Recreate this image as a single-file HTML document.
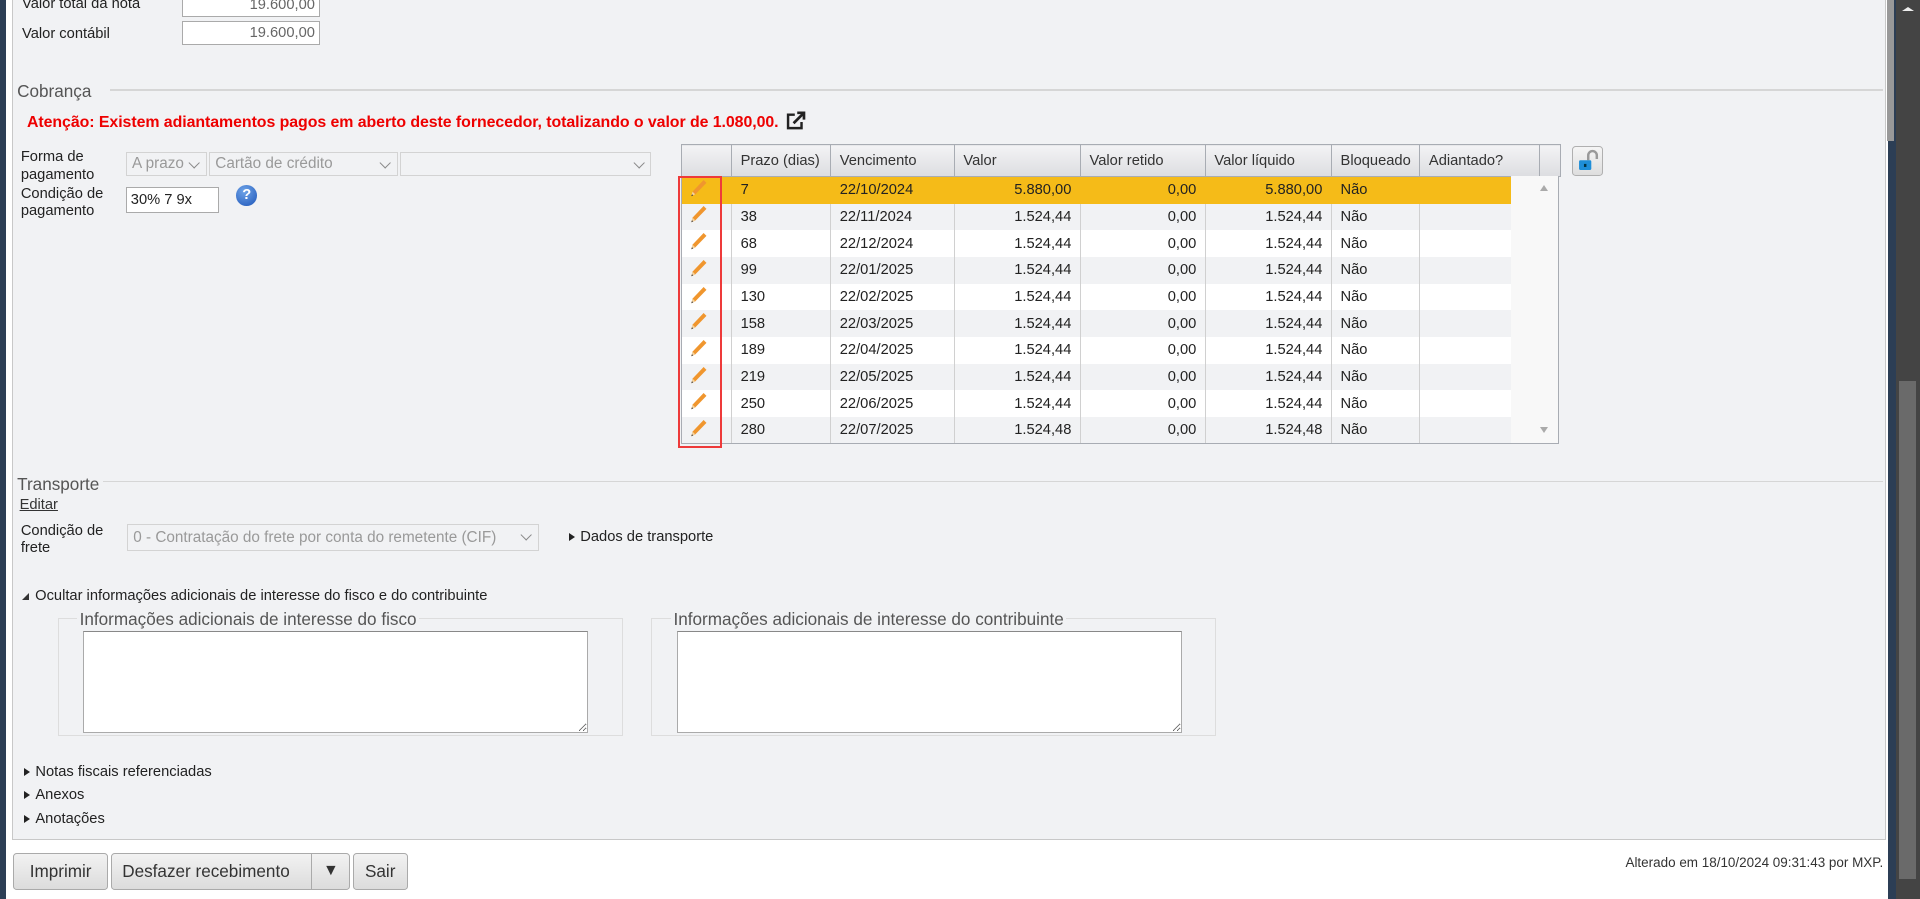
<!DOCTYPE html>
<html><head><meta charset="utf-8"><style>
*{box-sizing:border-box;margin:0;padding:0}
html,body{width:1920px;height:899px;overflow:hidden;background:#fff}
#w{zoom:1.22449;width:1568px;height:734px;position:relative;font-family:"Liberation Sans",sans-serif;font-size:12px;color:#222}
.a{position:absolute}
.panel{left:10px;top:-2px;width:1530px;height:688px;background:#f1f2f4;border:1px solid #c8c8c8}
.inp{position:absolute;background:#fff;border:1px solid #aaa;height:20px;font-size:12px;color:#666;text-align:right;padding:2px 3px;line-height:15px}
.sel{position:absolute;background:#f1f2f4;border:1px solid #d3d3d3;height:20px;color:#999;font-size:12.5px;padding:2px 4px;line-height:15px}
.sel:after{content:"";position:absolute;right:6px;top:5px;width:6px;height:6px;border-right:1.5px solid #888;border-bottom:1.5px solid #888;transform:rotate(45deg)}
.leg{font-size:14px;color:#555}
.hr{position:absolute;height:1px;background:#d6d6d6}
table{border-collapse:collapse;position:absolute;left:556px;top:118px;font-size:12px}
td,th{height:21.8px;padding:0 7px;white-space:nowrap;border-left:1px solid #d0d0d0;border-right:1px solid #d0d0d0}
th{font-weight:normal;text-align:left;height:26px;background:linear-gradient(#f3f3f5,#dcdde0);border:1px solid #a8acb3;color:#333}
td.r{text-align:right}
tr.s td{background:#f5bb18;border-color:#f5bb18}
tr.o td{background:#fff}
tr.e td{background:#f1f2f4}
td.p{padding:0 0 0 5px}
td.x{background:#f1f2f4!important;border:none}
.btn{position:absolute;top:697px;height:30px;border:1px solid #aaa;border-radius:3px;background:linear-gradient(#f2f2f2,#dcdcdc);font-size:14px;color:#333;line-height:28px;text-align:center}
.tri{display:inline-block;width:0;height:0;border-left:5px solid #222;border-top:4px solid transparent;border-bottom:4px solid transparent;margin-right:4px}
textarea{position:absolute;background:#fff;border:1px solid #aaa;border-top:1px solid #888;resize:both}
.fs{position:absolute;border:1px solid #ddd}
</style></head><body><div id="w">
<div class="a" style="left:0;top:0;width:5px;height:734px;background:#2c3e55"></div>
<div class="a" style="left:1542px;top:0;width:6px;height:734px;background:#2c3e55"></div>
<div class="a" style="left:1541px;top:0;width:6px;height:115px;background:#999"></div>
<div class="a" style="left:1548px;top:0;width:20px;height:734px;background:#444"></div>
<div class="a" style="left:1551px;top:311px;width:14px;height:407px;background:#6a6a6a"></div>
<div class="a" style="left:1553px;top:6px;width:0;height:0;border-left:5px solid transparent;border-right:5px solid transparent;border-bottom:4px solid #eee"></div>
<div class="a panel"></div>

<div class="a" style="left:18px;top:-3px">Valor total da nota</div>
<div class="inp" style="left:149px;top:-6px;width:112px">19.600,00</div>
<div class="a" style="left:18px;top:21px">Valor contábil</div>
<div class="inp" style="left:149px;top:17px;width:112px">19.600,00</div>

<div class="hr" style="left:90px;top:73px;width:1448px"></div>
<div class="a leg" style="left:14px;top:66px">Cobrança</div>
<div class="a" style="left:22px;top:93px;color:#e00;font-weight:bold;font-size:13px;letter-spacing:-0.05px">Atenção: Existem adiantamentos pagos em aberto deste fornecedor, totalizando o valor de 1.080,00.</div>
<svg class="a" style="left:641px;top:91px" width="18" height="16" viewBox="0 0 18 16"><path d="M8 3H2.5v11h11V9" fill="none" stroke="#222" stroke-width="2"/><path d="M7 10l8-8M10 1.5h5.5V7" fill="none" stroke="#222" stroke-width="2.2"/></svg>

<div class="a" style="left:17px;top:122px;line-height:14px">Forma de<br>pagamento</div>
<div class="sel" style="left:103px;top:124px;width:66px">A prazo</div>
<div class="sel" style="left:171px;top:124px;width:154px">Cartão de crédito</div>
<div class="sel" style="left:327px;top:124px;width:205px"></div>
<div class="a" style="left:17px;top:152px;line-height:14px">Condição de<br>pagamento</div>
<div class="inp" style="left:103px;top:153px;width:76px;height:21px;text-align:left;color:#222">30% 7 9x</div>
<div class="a" style="left:193px;top:151px;width:17px;height:17px;border-radius:50%;background:radial-gradient(circle at 40% 30%,#6fa4e8,#1d55b8);color:#fff;font-weight:bold;font-size:12px;text-align:center;line-height:17px">?</div>

<table>
<tr><th style="width:41px"></th><th style="width:81px">Prazo (dias)</th><th style="width:101px">Vencimento</th><th style="width:103px">Valor</th><th style="width:102px">Valor retido</th><th style="width:103px">Valor líquido</th><th style="width:70px">Bloqueado</th><th style="width:98px">Adiantado?</th><th style="width:17px"></th></tr>
<tbody id="tb"></tbody>
</table>
<div class="a" style="left:1234px;top:144px;width:38px;height:218px;background:#f8f8f8"></div>
<div class="a" style="left:556px;top:144px;width:717px;height:219px;border:1px solid #a8acb3;border-top:none;pointer-events:none"></div>
<div class="a" style="left:1258px;top:151px;border-left:4px solid transparent;border-right:4px solid transparent;border-bottom:5px solid #aaa"></div>
<div class="a" style="left:1258px;top:349px;border-left:4px solid transparent;border-right:4px solid transparent;border-top:5px solid #aaa"></div>
<div class="a" style="left:554px;top:144px;width:36px;height:222px;border:2px solid #ee3a3a"></div>
<div class="a" style="left:1284px;top:119px;width:25px;height:25px;border:1px solid #b0b0b0;border-radius:3px;background:linear-gradient(#f5f5f5,#dedede)"></div>
<svg class="a" style="left:1287px;top:121px" width="20" height="20" viewBox="0 0 20 20"><path d="M10 10V6a3.5 3.5 0 0 1 7 0v3" fill="none" stroke="#999" stroke-width="2"/><rect x="2.5" y="10" width="10" height="8" rx="1" fill="#1e8ed8"/><rect x="6.5" y="13" width="2" height="2.5" fill="#034"/></svg>

<div class="hr" style="left:84px;top:393px;width:1454px"></div>
<div class="a leg" style="left:14px;top:387px">Transporte</div>
<div class="a" style="left:16px;top:406px;text-decoration:underline;color:#333">Editar</div>
<div class="a" style="left:17px;top:427px;line-height:14px">Condição de<br>frete</div>
<div class="sel" style="left:104px;top:428px;width:336px;height:22px;line-height:17px">0 - Contratação do frete por conta do remetente (CIF)</div>
<div class="a" style="left:465px;top:432px"><span class="tri"></span>Dados de transporte</div>

<div class="a" style="left:18px;top:480px"><span style="display:inline-block;width:0;height:0;border-left:6px solid transparent;border-bottom:6px solid #333;margin-right:5px"></span>Ocultar informações adicionais de interesse do fisco e do contribuinte</div>
<div class="fs" style="left:47px;top:505px;width:462px;height:96px"></div>
<div class="a leg" style="left:63px;top:497px;background:#f1f2f4;padding:0 2px">Informações adicionais de interesse do fisco</div>
<textarea style="left:68px;top:515px;width:412px;height:84px"></textarea>
<div class="fs" style="left:532px;top:505px;width:461px;height:96px"></div>
<div class="a leg" style="left:548px;top:497px;background:#f1f2f4;padding:0 2px">Informações adicionais de interesse do contribuinte</div>
<textarea style="left:553px;top:515px;width:412px;height:84px"></textarea>

<div class="a" style="left:20px;top:624px"><span class="tri"></span>Notas fiscais referenciadas</div>
<div class="a" style="left:20px;top:643px"><span class="tri"></span>Anexos</div>
<div class="a" style="left:20px;top:662px"><span class="tri"></span>Anotações</div>

<div class="btn" style="left:11px;width:77px">Imprimir</div>
<div class="btn" style="left:91px;width:195px;text-align:left;padding-left:8px">Desfazer recebimento<span style="position:absolute;left:162px;top:0;width:1px;height:28px;background:#aaa"></span><span style="position:absolute;left:172px;top:0;font-size:13px">▼</span></div>
<div class="btn" style="left:288px;width:45px">Sair</div>
<div class="a" style="right:30px;top:698px;font-size:11px;color:#333">Alterado em 18/10/2024 09:31:43 por MXP.</div>
</div>
<script>
var d=[["7","22/10/2024","5.880,00","5.880,00"],["38","22/11/2024","1.524,44","1.524,44"],["68","22/12/2024","1.524,44","1.524,44"],["99","22/01/2025","1.524,44","1.524,44"],["130","22/02/2025","1.524,44","1.524,44"],["158","22/03/2025","1.524,44","1.524,44"],["189","22/04/2025","1.524,44","1.524,44"],["219","22/05/2025","1.524,44","1.524,44"],["250","22/06/2025","1.524,44","1.524,44"],["280","22/07/2025","1.524,48","1.524,48"]];
var pen='<svg width="17" height="17" viewBox="0 0 16 16"><path d="M2.5 14l1-3.5 8.5-9 2.2 2.2-8.7 9z" fill="#f0962e"/><path d="M2.5 14l1-3.5 2 2z" fill="#f3d3a0"/><path d="M2.5 14l.6-1.5.9.9z" fill="#333"/></svg>';
var h="";d.forEach(function(r,i){h+='<tr class="'+(i==0?'s':(i%2?'e':'o'))+'"><td class="p">'+pen+'</td><td>'+r[0]+'</td><td>'+r[1]+'</td><td class="r">'+r[2]+'</td><td class="r">0,00</td><td class="r">'+r[3]+'</td><td>Não</td><td></td><td class="x"></td></tr>'});
document.getElementById("tb").innerHTML=h;
</script>
</body></html>
